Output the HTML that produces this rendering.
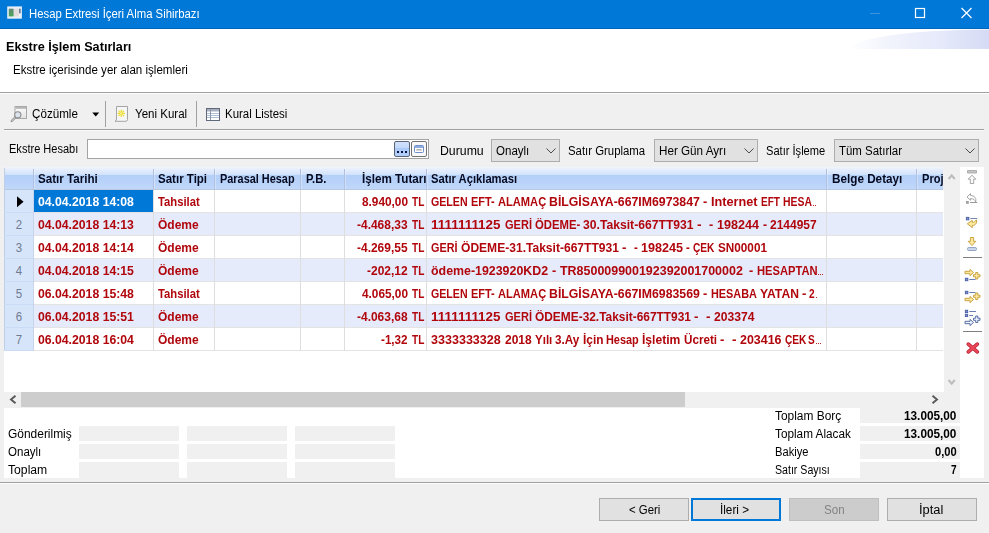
<!DOCTYPE html>
<html><head><meta charset="utf-8">
<style>
*{box-sizing:border-box;margin:0;padding:0}
html,body{width:989px;height:533px;overflow:hidden;background:#f0f0f0;font-family:"Liberation Sans",sans-serif;font-size:12px;color:#000}
.a{position:absolute}
.t{position:absolute;white-space:pre;line-height:14px}
.vl{position:absolute;width:1px;top:190px;height:161px;background:#dedede}
.vh{position:absolute;width:2px;top:169px;height:20px;background:linear-gradient(90deg,#b0c0e0 50%,rgba(255,255,255,.3) 50%)}
.hl{position:absolute;height:1px;left:4px;width:939px;background:#e3e3e3}
.alt{position:absolute;left:34px;width:909px;height:22px;background:#e6ebfc}
.btn{position:absolute;height:23px;width:90px;top:498px;border:1px solid #adadad;background:#e1e1e1}
.cmb{position:absolute;top:139px;height:23px;border:1px solid #adadad;background:#e1e1e1}
.fld{position:absolute;background:#f0f0f0;height:15px;width:100px}
.chev{position:absolute;top:148px}
</style></head><body>
<!-- title bar -->
<div class="a" style="left:0;top:0;width:989px;height:29px;background:#0078d7;border-bottom:1px solid #0067bf"></div>
<svg class="a" style="left:7px;top:6px" width="16" height="14" viewBox="0 0 16 14"><defs><linearGradient id="ig" x1="0" y1="0" x2="0" y2="1"><stop offset="0" stop-color="#5f8878"/><stop offset="1" stop-color="#4aa455"/></linearGradient></defs><rect x="0.200" y="0.400" width="14.700" height="12.300" fill="#e6eef6"/><rect x="1.800" y="2.700" width="4.800" height="7.700" fill="url(#ig)"/><rect x="7" y="2.700" width="4.800" height="7.700" fill="#e4dcdc"/><rect x="12" y="2.700" width="1.700" height="4.800" fill="#6a7f96"/><rect x="12" y="7.500" width="1.700" height="2.900" fill="#eef2f6"/></svg>
<svg class="a" style="left:860px;top:0" width="129" height="29" viewBox="0 0 129 29"><line x1="10" y1="13.500" x2="20" y2="13.500" stroke="#3d94de" stroke-width="1"/><rect x="55.500" y="8.500" width="9" height="9" fill="none" stroke="#fff" stroke-width="1.200"/><path d="M101.500 8 L111.500 18 M111.500 8 L101.500 18" stroke="#fff" stroke-width="1.200" fill="none"/></svg>
<!-- header -->
<div class="a" style="left:0;top:29px;width:989px;height:63px;background:#fff"></div>
<svg class="a" style="left:840px;top:29px" width="149" height="21" viewBox="0 0 149 21"><defs><linearGradient id="sw" x1="0" y1="0" x2="1" y2="0"><stop offset="0" stop-color="#ffffff"/><stop offset="0.300" stop-color="#f1f3fc"/><stop offset="0.650" stop-color="#e5e9fa"/><stop offset="1" stop-color="#d5daf5"/></linearGradient><filter id="bl" x="-5%" y="-20%" width="110%" height="140%"><feGaussianBlur stdDeviation="0.600"/></filter><clipPath id="cp"><rect x="0" y="0" width="149" height="20"/></clipPath></defs><g clip-path="url(#cp)"><path d="M8 20.500 C15 10 60 1 149 0.500 L152 0 L152 23 L8 23 Z" fill="url(#sw)" filter="url(#bl)"/></g></svg>
<div class="a" style="left:0;top:92px;width:989px;height:1px;background:#a0a0a0"></div>
<div class="a" style="left:0;top:93px;width:989px;height:1px;background:#fdfdfd"></div>
<!-- toolbar -->
<svg class="a" style="left:8px;top:102px" width="220" height="24" viewBox="8 102 220 24">
<defs><linearGradient id="wg" x1="0" y1="0" x2="0" y2="1"><stop offset="0" stop-color="#fdfdfd"/><stop offset="1" stop-color="#e2e2e2"/></linearGradient></defs>
<rect x="15" y="106.500" width="11.500" height="12" fill="url(#wg)" stroke="#a9a9a9"/><rect x="15.500" y="107" width="10.500" height="1.800" fill="#b6b6b6"/>
<path d="M15.600 117 L11.700 121" stroke="#8e8e8e" stroke-width="2.300" stroke-linecap="round"/><path d="M15.400 117.200 L11.900 120.800" stroke="#e9e9e9" stroke-width="0.900" stroke-linecap="round"/>
<circle cx="17.800" cy="114.800" r="3.100" fill="#dbe3ee" stroke="#8c8c8c" stroke-width="1.100"/>
<polygon points="92.300,112.500 99.200,112.500 95.750,116.400" fill="#000"/>
<path d="M116.500 106.500 H127.500 V119.500 Q127.500 121.300 125.500 121.300 H115 Q116.500 120.800 116.500 119 Z" fill="#f5f6f7" stroke="#a4a4a4"/>
<g stroke="#ecdc2c" stroke-width="1.200" stroke-linecap="round"><path d="M121.300 110.200 V116.600 M118.100 113.400 H124.500 M119 111.100 L123.600 115.700 M123.600 111.100 L119 115.700"/></g><circle cx="121.300" cy="113.400" r="1.200" fill="#f8f29a"/>
<rect x="206.500" y="108.500" width="13" height="12" fill="#fff" stroke="#60687b"/><rect x="207" y="109" width="12" height="2.500" fill="#a7afbf"/>
<path d="M207 113.500 H219 M207 115.500 H219 M207 117.500 H219" stroke="#aebdd6" stroke-width="1"/><path d="M210.500 109 V120" stroke="#8c96aa" stroke-width="1"/>
</svg>
<div class="a" style="left:105px;top:101px;width:1px;height:26px;background:#a0a0a0"></div>
<div class="a" style="left:196px;top:101px;width:1px;height:26px;background:#a0a0a0"></div>
<div class="a" style="left:4px;top:129px;width:980px;height:1px;background:#a0a0a0"></div>
<div class="a" style="left:4px;top:130px;width:980px;height:1px;background:#fafafa"></div>
<!-- filter row -->
<div class="a" style="left:87px;top:139px;width:342px;height:20px;background:#fff;border:1px solid #a3a3a3"></div>
<div class="a" style="left:394px;top:141px;width:16px;height:16px;border:1px solid #5b6474;border-radius:2px;background:linear-gradient(#d3e2fb 0%,#c3d8fa 40%,#abc9f8 45%,#b4cff9 100%)"></div>
<div class="a" style="left:397px;top:151px;width:2px;height:2px;background:#0a1440;box-shadow:4px 0 0 #0a1440,8px 0 0 #0a1440"></div>
<div class="a" style="left:411px;top:141px;width:16px;height:16px;border:1px solid #737373;border-radius:2px;background:#f9f9f9"></div>
<svg class="a" style="left:414px;top:145px" width="10" height="8" viewBox="0 0 10 8"><rect x="0.500" y="0.500" width="9" height="7" rx="1" fill="#fff" stroke="#6f8fcb"/><rect x="1" y="1" width="8" height="2" fill="#8eabdf"/><path d="M2.500 4.500h5M3 5v1M5 5v1M7 5v1" stroke="#9a9a9a" stroke-width="0.800" fill="none"/></svg>
<div class="cmb" style="left:491px;width:69px"></div>
<div class="cmb" style="left:654px;width:104px"></div>
<div class="cmb" style="left:834px;width:145px"></div>
<svg class="chev" style="left:546px" width="10" height="6" viewBox="0 0 10 6"><path d="M0.500 0.500 L5 5 L9.500 0.500" fill="none" stroke="#4a4a4a" stroke-width="1"/></svg>
<svg class="chev" style="left:744px" width="10" height="6" viewBox="0 0 10 6"><path d="M0.500 0.500 L5 5 L9.500 0.500" fill="none" stroke="#4a4a4a" stroke-width="1"/></svg>
<svg class="chev" style="left:965px" width="10" height="6" viewBox="0 0 10 6"><path d="M0.500 0.500 L5 5 L9.500 0.500" fill="none" stroke="#4a4a4a" stroke-width="1"/></svg>
<!-- grid -->
<div class="a" style="left:4px;top:167px;width:940px;height:225px;background:#fff"></div>
<div class="a" style="left:4px;top:190px;width:30px;height:161px;background:#d7e5fb"></div>
<div class="alt" style="top:213px"></div><div class="alt" style="top:259px"></div><div class="alt" style="top:305px"></div>
<div class="a" style="left:4px;top:167px;width:939px;height:23px;background:linear-gradient(#f0f4fc 0px,#cfe1fb 8px,#b4d0f9 8px,#b8d2f9 15px,#c1d8f9 22px,#b7c8e2 22px,#b7c8e2 23px)"></div>
<div class="a" style="left:4px;top:168px;width:1px;height:183px;background:#c0cfe8"></div>
<div class="hl" style="top:212px"></div><div class="hl" style="top:235px"></div><div class="hl" style="top:258px"></div><div class="hl" style="top:281px"></div><div class="hl" style="top:304px"></div><div class="hl" style="top:327px"></div><div class="hl" style="top:350px"></div>
<div class="vl" style="left:33px"></div><div class="vl" style="left:153px"></div><div class="vl" style="left:214px"></div><div class="vl" style="left:300px"></div><div class="vl" style="left:344px"></div><div class="vl" style="left:426px"></div><div class="vl" style="left:826px"></div><div class="vl" style="left:916px"></div>
<div class="vh" style="left:33px"></div><div class="vh" style="left:153px"></div><div class="vh" style="left:214px"></div><div class="vh" style="left:300px"></div><div class="vh" style="left:344px"></div><div class="vh" style="left:426px"></div><div class="vh" style="left:826px"></div><div class="vh" style="left:916px"></div>
<div class="a" style="left:4px;top:212px;width:29px;height:1px;background:#cadbf5"></div><div class="a" style="left:4px;top:235px;width:29px;height:1px;background:#cadbf5"></div><div class="a" style="left:4px;top:258px;width:29px;height:1px;background:#cadbf5"></div><div class="a" style="left:4px;top:281px;width:29px;height:1px;background:#cadbf5"></div><div class="a" style="left:4px;top:304px;width:29px;height:1px;background:#cadbf5"></div><div class="a" style="left:4px;top:327px;width:29px;height:1px;background:#cadbf5"></div><div class="a" style="left:4px;top:350px;width:29px;height:1px;background:#cadbf5"></div><div class="a" style="left:33px;top:190px;width:1px;height:161px;background:#c6d4ec"></div>
<div class="a" style="left:34px;top:190px;width:119px;height:22px;background:#0078d7"></div>
<svg class="a" style="left:16px;top:195px" width="9" height="13" viewBox="16 195 9 13"><polygon points="17,196.200 23.600,201.700 17,207.200" fill="#000"/></svg>
<!-- scrollbars -->
<div class="a" style="left:4px;top:392px;width:956px;height:16px;background:#f0f0f0"></div>
<div class="a" style="left:21px;top:392px;width:664px;height:15px;background:#cdcdcd"></div>
<svg class="a" style="left:9px;top:395px" width="8" height="9" viewBox="0 0 8 9"><path d="M6.500 0.800 L2 4.500 L6.500 8.200" fill="none" stroke="#585858" stroke-width="1.900"/></svg>
<svg class="a" style="left:931px;top:395px" width="8" height="9" viewBox="0 0 8 9"><path d="M1.500 0.800 L6 4.500 L1.500 8.200" fill="none" stroke="#585858" stroke-width="1.900"/></svg>
<div class="a" style="left:944px;top:167px;width:16px;height:225px;background:#f0f0f0"></div><div class="a" style="left:943px;top:167px;width:1px;height:23px;background:#f0f0f0"></div>
<svg class="a" style="left:947px;top:173px" width="10" height="7" viewBox="0 0 10 7"><path d="M1.600 6 L4.700 2.300 L7.800 6" fill="none" stroke="#bdbdbd" stroke-width="2.100"/></svg>
<svg class="a" style="left:947px;top:379px" width="10" height="7" viewBox="0 0 10 7"><path d="M1.600 1 L4.700 4.700 L7.800 1" fill="none" stroke="#bdbdbd" stroke-width="2.100"/></svg>
<!-- side icon strip -->
<div class="a" style="left:960px;top:167px;width:24px;height:311px;background:#fff"></div>
<svg class="a" style="left:960px;top:167px" width="24" height="195" viewBox="960 167 24 195">
<g fill="#fbfbfb" stroke="#9c9c9c" stroke-width="0.900" stroke-linejoin="round">
<rect x="967.500" y="170.500" width="9" height="2.500" fill="#c6c6c6" stroke="#a8a8a8"/>
<path d="M972 175.200 L975.800 179.200 H973.700 V183.500 H970.300 V179.200 H968.200 Z"/>
<path d="M970.500 193.500 L967 197 L970.500 200.300 V198.600 C973.500 198.600 975 199.800 975.600 202 C976.800 198.300 974.500 195.600 970.500 195.400 Z"/>
</g>
<rect x="966" y="201" width="2.800" height="2.800" fill="#a2a2a2"/><path d="M970 202.500 H977.300" stroke="#9a9a9a"/>
<g fill="#fdeaa0" stroke="#c49c34" stroke-width="0.900" stroke-linejoin="miter">
<path d="M976.300 219.800 C977.500 223.300 975 225.500 972.300 225.500 V227.600 L967.300 223.800 L972.300 220.400 V222.400 C974 222.400 975.600 221.400 976.300 219.800 Z" stroke-linejoin="round"/>
<path d="M970.400 237.500 H973.600 V241.300 H975.800 L972 245.600 L968.200 241.300 H970.400 Z" stroke-linejoin="round"/>
<path d="M965 271.300 H970 V269.400 L973.500 272.500 L970 275.600 V273.700 H965 Z" stroke-linejoin="round"/>
<path d="M975.700 272.500 H977.800 V274.700 H980 V276.800 H977.800 V279 H975.700 V276.800 H973.500 V274.700 H975.700 Z"/>
<path d="M965 298.300 H970 V296.400 L973.500 299.500 L970 302.600 V300.700 H965 Z" stroke-linejoin="round"/>
<path d="M975.700 293 H977.800 V295.200 H980 V297.300 H977.800 V299.500 H975.700 V297.300 H973.500 V295.200 H975.700 Z"/>
</g>
<rect x="966.3" y="217.3" width="2.6" height="2.6" fill="#7d92cf" stroke="#4358a0" stroke-width="0.800"/><path d="M970.300 218.500 H977.300" stroke="#7686ac"/>
<rect x="967.500" y="247.500" width="9" height="3" rx="1.300" fill="#cbd8ea" stroke="#8a9cbc" stroke-width="0.900"/>
<path d="M963 257.500 H982" stroke="#7f7f7f"/>
<rect x="965.3" y="278.2" width="2.6" height="2.6" fill="#7d92cf" stroke="#4358a0" stroke-width="0.800"/><path d="M969.300 279.500 H975.500" stroke="#6a80b2"/>
<rect x="965.3" y="291.2" width="2.6" height="2.6" fill="#7d92cf" stroke="#4358a0" stroke-width="0.800"/><path d="M969.300 292.500 H975.500" stroke="#6a80b2"/>
<rect x="965.3" y="310.2" width="2.4" height="2.4" fill="#7d92cf" stroke="#4358a0" stroke-width="0.800"/><path d="M969.300 311.500 H976" stroke="#6a80b2"/>
<rect x="965.3" y="314.2" width="2.4" height="2.4" fill="#7d92cf" stroke="#4358a0" stroke-width="0.800"/><path d="M969.300 315.500 H973" stroke="#6a80b2"/>
<g fill="#eef2fa" stroke="#46629a" stroke-width="0.900">
<path d="M965 321.300 H970 V319.400 L973.500 322.500 L970 325.600 V323.700 H965 Z" stroke-linejoin="round"/>
<path d="M975.700 316 H977.800 V318.200 H980 V320.300 H977.800 V322.500 H975.700 V320.300 H973.500 V318.200 H975.700 Z"/>
</g>
<path d="M963 331.500 H982" stroke="#7f7f7f"/>
<path d="M968.300 344.200 L977.300 351.800 M977.300 344.200 L968.300 351.800" stroke="#b51d31" stroke-width="3.700" stroke-linecap="round"/>
<path d="M968.300 344.200 L977.300 351.800 M977.300 344.200 L968.300 351.800" stroke="#ea4858" stroke-width="2.200" stroke-linecap="round"/>
</svg>
<!-- footer -->
<div class="a" style="left:4px;top:408px;width:956px;height:70px;background:#fff"></div>
<div class="fld" style="left:79px;top:426px"></div><div class="fld" style="left:187px;top:426px"></div><div class="fld" style="left:295px;top:426px"></div>
<div class="fld" style="left:79px;top:444px"></div><div class="fld" style="left:187px;top:444px"></div><div class="fld" style="left:295px;top:444px"></div>
<div class="fld" style="left:79px;top:462px;height:16px"></div><div class="fld" style="left:187px;top:462px;height:16px"></div><div class="fld" style="left:295px;top:462px;height:16px"></div>
<div class="fld" style="left:860px;top:408px;width:100px"></div><div class="fld" style="left:860px;top:426px;width:100px"></div><div class="fld" style="left:860px;top:444px;width:100px"></div><div class="fld" style="left:860px;top:462px;width:100px;height:16px"></div>
<div class="a" style="left:0;top:482px;width:989px;height:1px;background:#a0a0a0"></div>
<div class="a" style="left:0;top:483px;width:989px;height:1px;background:#fdfdfd"></div>
<div class="btn" style="left:599px"></div>
<div class="btn" style="left:691px;border:2px solid #0078d7"></div>
<div class="btn" style="left:789px;background:#cccccc;border-color:#bfbfbf"></div>
<div class="btn" style="left:887px"></div>
<div class="t" style="left:29px;top:6.84px;color:#fff;transform:scaleX(0.9444);transform-origin:0 0">Hesap Extresi İçeri Alma Sihirbazı</div>
<div class="t" style="left:5.5px;top:39.84px;font-weight:bold;transform:scaleX(1.0557);transform-origin:0 0">Ekstre İşlem Satırları</div>
<div class="t" style="left:13.25px;top:62.84px;transform:scaleX(0.9642);transform-origin:0 0">Ekstre içerisinde yer alan işlemleri</div>
<div class="t" style="left:31.75px;top:106.84px;transform:scaleX(0.9701);transform-origin:0 0">Çözümle</div>
<div class="t" style="left:134.5px;top:106.84px;transform:scaleX(0.9609);transform-origin:0 0">Yeni Kural</div>
<div class="t" style="left:225px;top:106.84px;transform:scaleX(0.9545);transform-origin:0 0">Kural Listesi</div>
<div class="t" style="left:9.4px;top:141.84px;transform:scaleX(0.9196);transform-origin:0 0">Ekstre Hesabı</div>
<div class="t" style="left:439.5px;top:143.84px;transform:scaleX(1.0237);transform-origin:0 0">Durumu</div>
<div class="t" style="left:495.75px;top:143.84px;transform:scaleX(0.9608);transform-origin:0 0">Onaylı</div>
<div class="t" style="left:568.25px;top:143.84px;transform:scaleX(0.9487);transform-origin:0 0">Satır Gruplama</div>
<div class="t" style="left:658.5px;top:143.84px;transform:scaleX(0.9717);transform-origin:0 0">Her Gün Ayrı</div>
<div class="t" style="left:766.25px;top:143.84px;transform:scaleX(0.9247);transform-origin:0 0">Satır İşleme</div>
<div class="t" style="left:839px;top:143.84px;transform:scaleX(0.9543);transform-origin:0 0">Tüm Satırlar</div>
<div class="t" style="left:38px;top:171.84px;font-weight:bold;color:#050a20;transform:scaleX(0.9681);transform-origin:0 0">Satır Tarihi</div>
<div class="t" style="left:158.25px;top:171.84px;font-weight:bold;color:#050a20;transform:scaleX(0.9599);transform-origin:0 0">Satır Tipi</div>
<div class="t" style="left:219.5px;top:171.84px;font-weight:bold;color:#050a20;transform:scaleX(0.9085);transform-origin:0 0">Parasal Hesap</div>
<div class="t" style="left:305.75px;top:171.84px;font-weight:bold;color:#050a20;transform:scaleX(0.9321);transform-origin:0 0">P.B.</div>
<div class="t" style="left:362px;top:171.84px;font-weight:bold;color:#050a20;transform:scaleX(0.9716);transform-origin:0 0">İşlem Tutarı</div>
<div class="t" style="left:431.25px;top:171.84px;font-weight:bold;color:#050a20;transform:scaleX(0.9336);transform-origin:0 0">Satır Açıklaması</div>
<div class="t" style="left:832px;top:171.84px;font-weight:bold;color:#050a20;transform:scaleX(0.9764);transform-origin:0 0">Belge Detayı</div>
<div class="t" style="left:922px;top:171.84px;font-weight:bold;color:#050a20;transform:scaleX(0.9216);transform-origin:0 0">Proj</div>
<div class="t" style="left:38px;top:194.84px;font-weight:bold;color:#fff;transform:scaleX(1.0195);transform-origin:0 0">04.04.2018 14:08</div>
<div class="t" style="left:158.25px;top:194.84px;font-weight:bold;color:#b0060c;transform:scaleX(0.9391);transform-origin:0 0">Tahsilat</div>
<div class="t" style="left:361.6px;top:194.84px;font-weight:bold;color:#b0060c;transform:scaleX(0.9843);transform-origin:0 0">8.940,00</div>
<div class="t" style="left:411.56px;top:194.84px;font-weight:bold;color:#b0060c;transform:scaleX(0.8400);transform-origin:0 0">TL</div>
<div class="t" style="left:431.25px;top:194.84px;font-weight:bold;color:#b0060c;transform:scaleX(0.8842);transform-origin:0 0">GELEN </div>
<div class="t" style="left:470.75px;top:194.84px;font-weight:bold;color:#b0060c;transform:scaleX(0.9120);transform-origin:0 0">EFT- </div>
<div class="t" style="left:497.5px;top:194.84px;font-weight:bold;color:#b0060c;transform:scaleX(0.9264);transform-origin:0 0">ALAMAÇ </div>
<div class="t" style="left:548.75px;top:194.84px;font-weight:bold;color:#b0060c;transform:scaleX(1.0247);transform-origin:0 0">BİLGİSAYA-667IM6973847 </div>
<div class="t" style="left:703px;top:194.84px;font-weight:bold;color:#b0060c;transform:scaleX(1.0573);transform-origin:0 0">- </div>
<div class="t" style="left:710.75px;top:194.84px;font-weight:bold;color:#b0060c;transform:scaleX(1.0562);transform-origin:0 0">Internet </div>
<div class="t" style="left:760.75px;top:194.84px;font-weight:bold;color:#b0060c;transform:scaleX(0.8366);transform-origin:0 0">EFT </div>
<div class="t" style="left:782.5px;top:194.84px;font-weight:bold;color:#b0060c;transform:scaleX(0.8686);transform-origin:0 0">HESA</div>
<div class="a" style="left:813.05px;top:204.8px;width:1.200px;height:1.200px;background:#b0060c;opacity:.85"></div>
<div class="a" style="left:815.05px;top:204.8px;width:1.200px;height:1.200px;background:#b0060c;opacity:.85"></div>
<div class="t" style="left:38px;top:217.84px;font-weight:bold;color:#b0060c;transform:scaleX(1.0195);transform-origin:0 0">04.04.2018 14:13</div>
<div class="t" style="left:158.25px;top:217.84px;font-weight:bold;color:#b0060c;transform:scaleX(0.9998);transform-origin:0 0">Ödeme</div>
<div class="t" style="left:357px;top:217.84px;font-weight:bold;color:#b0060c;transform:scaleX(0.9974);transform-origin:0 0">-4.468,33</div>
<div class="t" style="left:411.56px;top:217.84px;font-weight:bold;color:#b0060c;transform:scaleX(0.8400);transform-origin:0 0">TL</div>
<div class="t" style="left:431.25px;top:217.84px;font-weight:bold;color:#b0060c;transform:scaleX(1.1194);transform-origin:0 0">1111111125 </div>
<div class="t" style="left:504.5px;top:217.84px;font-weight:bold;color:#b0060c;transform:scaleX(0.9182);transform-origin:0 0">GERİ </div>
<div class="t" style="left:534.5px;top:217.84px;font-weight:bold;color:#b0060c;transform:scaleX(0.9448);transform-origin:0 0">ÖDEME- </div>
<div class="t" style="left:583px;top:217.84px;font-weight:bold;color:#b0060c;transform:scaleX(1.0133);transform-origin:0 0">30.Taksit-667TT931 </div>
<div class="t" style="left:697px;top:217.84px;font-weight:bold;color:#b0060c;transform:scaleX(1.1487);transform-origin:0 0">-  </div>
<div class="t" style="left:709.25px;top:217.84px;font-weight:bold;color:#b0060c;transform:scaleX(1.0573);transform-origin:0 0">- </div>
<div class="t" style="left:717px;top:217.84px;font-weight:bold;color:#b0060c;transform:scaleX(1.0489);transform-origin:0 0">198244 </div>
<div class="t" style="left:762.5px;top:217.84px;font-weight:bold;color:#b0060c;transform:scaleX(1.0232);transform-origin:0 0">- </div>
<div class="t" style="left:770px;top:217.84px;font-weight:bold;color:#b0060c;transform:scaleX(0.9991);transform-origin:0 0">2144957</div>
<div class="t" style="left:19px;top:217.84px;color:#6f7a90;transform:translateX(-50%) scaleX(0.9515)">2</div>
<div class="t" style="left:38px;top:240.84px;font-weight:bold;color:#b0060c;transform:scaleX(1.0195);transform-origin:0 0">04.04.2018 14:14</div>
<div class="t" style="left:158.25px;top:240.84px;font-weight:bold;color:#b0060c;transform:scaleX(0.9998);transform-origin:0 0">Ödeme</div>
<div class="t" style="left:357px;top:240.84px;font-weight:bold;color:#b0060c;transform:scaleX(0.9974);transform-origin:0 0">-4.269,55</div>
<div class="t" style="left:411.56px;top:240.84px;font-weight:bold;color:#b0060c;transform:scaleX(0.8400);transform-origin:0 0">TL</div>
<div class="t" style="left:431.25px;top:240.84px;font-weight:bold;color:#b0060c;transform:scaleX(0.9029);transform-origin:0 0">GERİ </div>
<div class="t" style="left:460.75px;top:240.84px;font-weight:bold;color:#b0060c;transform:scaleX(1.0046);transform-origin:0 0">ÖDEME-31.Taksit-667TT931 </div>
<div class="t" style="left:622px;top:240.84px;font-weight:bold;color:#b0060c;transform:scaleX(1.1018);transform-origin:0 0">-  </div>
<div class="t" style="left:633.75px;top:240.84px;font-weight:bold;color:#b0060c;transform:scaleX(0.9550);transform-origin:0 0">- </div>
<div class="t" style="left:640.75px;top:240.84px;font-weight:bold;color:#b0060c;transform:scaleX(1.0489);transform-origin:0 0">198245 </div>
<div class="t" style="left:686.25px;top:240.84px;font-weight:bold;color:#b0060c;transform:scaleX(0.9550);transform-origin:0 0">- </div>
<div class="t" style="left:693.25px;top:240.84px;font-weight:bold;color:#b0060c;transform:scaleX(0.8458);transform-origin:0 0">ÇEK </div>
<div class="t" style="left:717.5px;top:240.84px;font-weight:bold;color:#b0060c;transform:scaleX(0.9779);transform-origin:0 0">SN00001</div>
<div class="t" style="left:19px;top:240.84px;color:#6f7a90;transform:translateX(-50%) scaleX(0.9515)">3</div>
<div class="t" style="left:38px;top:263.84px;font-weight:bold;color:#b0060c;transform:scaleX(1.0195);transform-origin:0 0">04.04.2018 14:15</div>
<div class="t" style="left:158.25px;top:263.84px;font-weight:bold;color:#b0060c;transform:scaleX(0.9998);transform-origin:0 0">Ödeme</div>
<div class="t" style="left:367px;top:263.84px;font-weight:bold;color:#b0060c;transform:scaleX(0.9969);transform-origin:0 0">-202,12</div>
<div class="t" style="left:411.56px;top:263.84px;font-weight:bold;color:#b0060c;transform:scaleX(0.8400);transform-origin:0 0">TL</div>
<div class="t" style="left:431.25px;top:263.84px;font-weight:bold;color:#b0060c;transform:scaleX(1.0323);transform-origin:0 0">ödeme-1923920KD2 </div>
<div class="t" style="left:551.75px;top:263.84px;font-weight:bold;color:#b0060c;transform:scaleX(1.0573);transform-origin:0 0">- </div>
<div class="t" style="left:559.5px;top:263.84px;font-weight:bold;color:#b0060c;transform:scaleX(1.0378);transform-origin:0 0">TR850009900192392001700002  </div>
<div class="t" style="left:749.25px;top:263.84px;font-weight:bold;color:#b0060c;transform:scaleX(1.0573);transform-origin:0 0">- </div>
<div class="t" style="left:757px;top:263.84px;font-weight:bold;color:#b0060c;transform:scaleX(0.9310);transform-origin:0 0">HESAPTAN</div>
<div class="a" style="left:818.3px;top:273.8px;width:1.200px;height:1.200px;background:#b0060c;opacity:.85"></div>
<div class="a" style="left:820.3px;top:273.8px;width:1.200px;height:1.200px;background:#b0060c;opacity:.85"></div>
<div class="a" style="left:822.3px;top:273.8px;width:1.200px;height:1.200px;background:#b0060c;opacity:.85"></div>
<div class="t" style="left:19px;top:263.84px;color:#6f7a90;transform:translateX(-50%) scaleX(0.9515)">4</div>
<div class="t" style="left:38px;top:286.84px;font-weight:bold;color:#b0060c;transform:scaleX(1.0195);transform-origin:0 0">06.04.2018 15:48</div>
<div class="t" style="left:158.25px;top:286.84px;font-weight:bold;color:#b0060c;transform:scaleX(0.9391);transform-origin:0 0">Tahsilat</div>
<div class="t" style="left:361.6px;top:286.84px;font-weight:bold;color:#b0060c;transform:scaleX(0.9843);transform-origin:0 0">4.065,00</div>
<div class="t" style="left:411.56px;top:286.84px;font-weight:bold;color:#b0060c;transform:scaleX(0.8400);transform-origin:0 0">TL</div>
<div class="t" style="left:431.25px;top:286.84px;font-weight:bold;color:#b0060c;transform:scaleX(0.8842);transform-origin:0 0">GELEN </div>
<div class="t" style="left:470.75px;top:286.84px;font-weight:bold;color:#b0060c;transform:scaleX(0.9120);transform-origin:0 0">EFT- </div>
<div class="t" style="left:497.5px;top:286.84px;font-weight:bold;color:#b0060c;transform:scaleX(0.9264);transform-origin:0 0">ALAMAÇ </div>
<div class="t" style="left:548.75px;top:286.84px;font-weight:bold;color:#b0060c;transform:scaleX(1.0247);transform-origin:0 0">BİLGİSAYA-667IM6983569 </div>
<div class="t" style="left:703px;top:286.84px;font-weight:bold;color:#b0060c;transform:scaleX(1.0573);transform-origin:0 0">- </div>
<div class="t" style="left:710.75px;top:286.84px;font-weight:bold;color:#b0060c;transform:scaleX(0.9064);transform-origin:0 0">HESABA </div>
<div class="t" style="left:759.7px;top:286.84px;font-weight:bold;color:#b0060c;transform:scaleX(1.0124);transform-origin:0 0">YATAN </div>
<div class="t" style="left:802px;top:286.84px;font-weight:bold;color:#b0060c;transform:scaleX(1.0914);transform-origin:0 0">- </div>
<div class="t" style="left:809.12px;top:286.84px;font-weight:bold;color:#b0060c;transform:scaleX(0.8400);transform-origin:0 0">2</div>
<div class="a" style="left:816.3px;top:296.8px;width:1.200px;height:1.200px;background:#b0060c;opacity:.85"></div>
<div class="t" style="left:19px;top:286.84px;color:#6f7a90;transform:translateX(-50%) scaleX(0.9515)">5</div>
<div class="t" style="left:38px;top:309.84px;font-weight:bold;color:#b0060c;transform:scaleX(1.0195);transform-origin:0 0">06.04.2018 15:51</div>
<div class="t" style="left:158.25px;top:309.84px;font-weight:bold;color:#b0060c;transform:scaleX(0.9998);transform-origin:0 0">Ödeme</div>
<div class="t" style="left:357px;top:309.84px;font-weight:bold;color:#b0060c;transform:scaleX(0.9974);transform-origin:0 0">-4.063,68</div>
<div class="t" style="left:411.56px;top:309.84px;font-weight:bold;color:#b0060c;transform:scaleX(0.8400);transform-origin:0 0">TL</div>
<div class="t" style="left:431.25px;top:309.84px;font-weight:bold;color:#b0060c;transform:scaleX(1.1194);transform-origin:0 0">1111111125 </div>
<div class="t" style="left:504.5px;top:309.84px;font-weight:bold;color:#b0060c;transform:scaleX(0.9182);transform-origin:0 0">GERİ </div>
<div class="t" style="left:534.5px;top:309.84px;font-weight:bold;color:#b0060c;transform:scaleX(0.9922);transform-origin:0 0">ÖDEME-32.Taksit-667TT931 </div>
<div class="t" style="left:693.75px;top:309.84px;font-weight:bold;color:#b0060c;transform:scaleX(1.1018);transform-origin:0 0">-  </div>
<div class="t" style="left:705.5px;top:309.84px;font-weight:bold;color:#b0060c;transform:scaleX(1.1255);transform-origin:0 0">- </div>
<div class="t" style="left:713.75px;top:309.84px;font-weight:bold;color:#b0060c;transform:scaleX(1.0094);transform-origin:0 0">203374</div>
<div class="t" style="left:19px;top:309.84px;color:#6f7a90;transform:translateX(-50%) scaleX(0.9515)">6</div>
<div class="t" style="left:38px;top:332.84px;font-weight:bold;color:#b0060c;transform:scaleX(1.0195);transform-origin:0 0">06.04.2018 16:04</div>
<div class="t" style="left:158.25px;top:332.84px;font-weight:bold;color:#b0060c;transform:scaleX(0.9998);transform-origin:0 0">Ödeme</div>
<div class="t" style="left:381px;top:332.84px;font-weight:bold;color:#b0060c;transform:scaleX(0.9719);transform-origin:0 0">-1,32</div>
<div class="t" style="left:411.56px;top:332.84px;font-weight:bold;color:#b0060c;transform:scaleX(0.8400);transform-origin:0 0">TL</div>
<div class="t" style="left:431.25px;top:332.84px;font-weight:bold;color:#b0060c;transform:scaleX(1.0453);transform-origin:0 0">3333333328 </div>
<div class="t" style="left:504.5px;top:332.84px;font-weight:bold;color:#b0060c;transform:scaleX(0.9990);transform-origin:0 0">2018 </div>
<div class="t" style="left:534.5px;top:332.84px;font-weight:bold;color:#b0060c;transform:scaleX(0.9606);transform-origin:0 0">Yılı </div>
<div class="t" style="left:555px;top:332.84px;font-weight:bold;color:#b0060c;transform:scaleX(0.9739);transform-origin:0 0">3.Ay </div>
<div class="t" style="left:582.5px;top:332.84px;font-weight:bold;color:#b0060c;transform:scaleX(0.9893);transform-origin:0 0">İçin </div>
<div class="t" style="left:606.25px;top:332.84px;font-weight:bold;color:#b0060c;transform:scaleX(0.9085);transform-origin:0 0">Hesap </div>
<div class="t" style="left:642px;top:332.84px;font-weight:bold;color:#b0060c;transform:scaleX(1.0097);transform-origin:0 0">İşletim </div>
<div class="t" style="left:683.75px;top:332.84px;font-weight:bold;color:#b0060c;transform:scaleX(0.9706);transform-origin:0 0">Ücreti </div>
<div class="t" style="left:720px;top:332.84px;font-weight:bold;color:#b0060c;transform:scaleX(1.1018);transform-origin:0 0">-  </div>
<div class="t" style="left:731.75px;top:332.84px;font-weight:bold;color:#b0060c;transform:scaleX(1.1255);transform-origin:0 0">- </div>
<div class="t" style="left:740px;top:332.84px;font-weight:bold;color:#b0060c;transform:scaleX(1.0374);transform-origin:0 0">203416 </div>
<div class="t" style="left:785px;top:332.84px;font-weight:bold;color:#b0060c;transform:scaleX(0.8458);transform-origin:0 0">ÇEK </div>
<div class="t" style="left:808.28px;top:332.84px;font-weight:bold;color:#b0060c;transform:scaleX(0.8400);transform-origin:0 0">S</div>
<div class="a" style="left:816.3px;top:342.8px;width:1.200px;height:1.200px;background:#b0060c;opacity:.85"></div>
<div class="a" style="left:818.3px;top:342.8px;width:1.200px;height:1.200px;background:#b0060c;opacity:.85"></div>
<div class="a" style="left:820.3px;top:342.8px;width:1.200px;height:1.200px;background:#b0060c;opacity:.85"></div>
<div class="t" style="left:19px;top:332.84px;color:#6f7a90;transform:translateX(-50%) scaleX(0.9515)">7</div>
<div class="t" style="left:7.5px;top:426.84px;transform:scaleX(0.9958);transform-origin:0 0">Gönderilmiş</div>
<div class="t" style="left:7.5px;top:444.84px;transform:scaleX(0.9608);transform-origin:0 0">Onaylı</div>
<div class="t" style="left:7.5px;top:462.84px;transform:scaleX(1.0145);transform-origin:0 0">Toplam</div>
<div class="t" style="left:774.5px;top:408.84px;transform:scaleX(0.9934);transform-origin:0 0">Toplam Borç</div>
<div class="t" style="left:774.5px;top:426.84px;transform:scaleX(0.9806);transform-origin:0 0">Toplam Alacak</div>
<div class="t" style="left:774.5px;top:444.84px;transform:scaleX(0.9286);transform-origin:0 0">Bakiye</div>
<div class="t" style="left:774.5px;top:462.84px;transform:scaleX(0.8835);transform-origin:0 0">Satır Sayısı</div>
<div class="t" style="left:903.75px;top:408.84px;font-weight:bold;transform:scaleX(0.9821);transform-origin:0 0">13.005,00</div>
<div class="t" style="left:903.75px;top:426.84px;font-weight:bold;transform:scaleX(0.9821);transform-origin:0 0">13.005,00</div>
<div class="t" style="left:934.5px;top:444.84px;font-weight:bold;transform:scaleX(0.9290);transform-origin:0 0">0,00</div>
<div class="t" style="left:950.62px;top:462.84px;font-weight:bold;transform:scaleX(0.8400);transform-origin:0 0">7</div>
<div class="t" style="left:629.25px;top:502.84px;transform:scaleX(0.9507);transform-origin:0 0">&lt; Geri</div>
<div class="t" style="left:720.27px;top:502.84px;transform:scaleX(0.9766);transform-origin:0 0">İleri &gt;</div>
<div class="t" style="left:824px;top:502.84px;color:#838383;transform:scaleX(0.9672);transform-origin:0 0">Son</div>
<div class="t" style="left:919.43px;top:502.84px;transform:scaleX(1.0706);transform-origin:0 0">İptal</div>
</body></html>
